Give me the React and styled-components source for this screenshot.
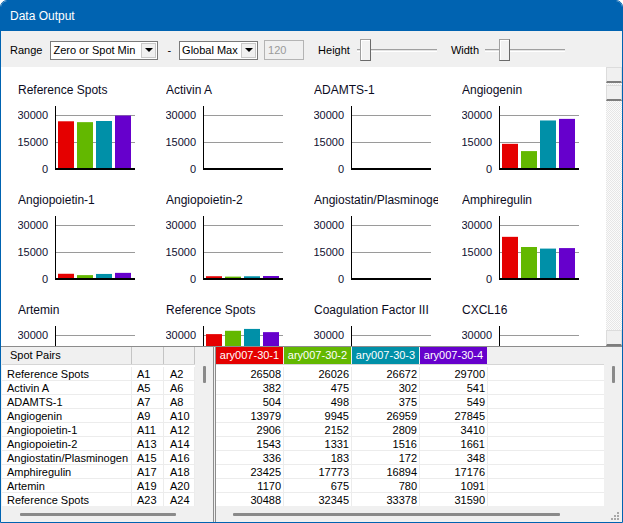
import React from 'react';
import styled, { createGlobalStyle } from 'styled-components';

const COLORS = ['#e50000', '#63b800', '#0090a8', '#6600cc'];
const SAMPLES = ['ary007-30-1', 'ary007-30-2', 'ary007-30-3', 'ary007-30-4'];

const ROWS = [
    ['Reference Spots', 'A1', 'A2', [26508, 26026, 26672, 29700]],
    ['Activin A', 'A5', 'A6', [382, 475, 302, 541]],
    ['ADAMTS-1', 'A7', 'A8', [504, 498, 375, 549]],
    ['Angiogenin', 'A9', 'A10', [13979, 9945, 26959, 27845]],
    ['Angiopoietin-1', 'A11', 'A12', [2906, 2152, 2809, 3410]],
    ['Angiopoietin-2', 'A13', 'A14', [1543, 1331, 1516, 1661]],
    ['Angiostatin/Plasminogen', 'A15', 'A16', [336, 183, 172, 348]],
    ['Amphiregulin', 'A17', 'A18', [23425, 17773, 16894, 17176]],
    ['Artemin', 'A19', 'A20', [1170, 675, 780, 1091]],
    ['Reference Spots', 'A23', 'A24', [30488, 32345, 33378, 31590]],
];

const CHARTS = [
    ...ROWS.map(r => ({ title: r[0], values: r[3] })),
    { title: 'Coagulation Factor III', values: [812, 640, 705, 930] },
    { title: 'CXCL16', values: [1204, 988, 1010, 1322] },
];

const GlobalStyle = createGlobalStyle`
    html, body {
        margin: 0;
        padding: 0;
        background: #ffffff;
    }
    * { box-sizing: border-box; }
`;

const Window = styled.div`
    width: 623px;
    height: 523px;
    display: flex;
    flex-direction: column;
    border: 1px solid #0063b1;
    border-radius: 7px 7px 0 0;
    overflow: hidden;
    background: #f0f0f0;
    font-family: "Liberation Sans", Arial, sans-serif;
    color: #000;
`;

const TitleBar = styled.div`
    height: 30px;
    flex: none;
    display: flex;
    align-items: center;
    padding-left: 9px;
    background: #0063b1;
    color: #fff;
    font-size: 12px;
`;

const Toolbar = styled.div`
    height: 36px;
    flex: none;
    display: flex;
    align-items: center;
    padding: 2px 0 0 9px;
    font-size: 11px;
`;

const Label = styled.span`
    margin-left: ${p => p.$ml || 0}px;
    white-space: nowrap;
`;

const Select = styled.div`
    margin-left: ${p => p.$ml || 0}px;
    width: ${p => p.$w}px;
    height: 19px;
    display: flex;
    align-items: stretch;
    background: #fff;
    border: 1px solid #7a7a7a;
`;

const SelectText = styled.span`
    flex: 1;
    padding-left: 2px;
    line-height: 17px;
    white-space: nowrap;
    overflow: hidden;
`;

const SelectButton = styled.span`
    width: 15px;
    margin: 1px;
    display: flex;
    align-items: center;
    justify-content: center;
    background: #f0f0f0;
    border: 1px solid #c8c8c8;
    &::after {
        content: '';
        border-left: 4px solid transparent;
        border-right: 4px solid transparent;
        border-top: 4px solid #000;
    }
`;

const DisabledInput = styled.div`
    margin-left: 6px;
    width: 40px;
    height: 20px;
    padding-left: 3px;
    line-height: 18px;
    color: #9a9a9a;
    background: #f0f0f0;
    border: 1px solid #b4b4b4;
`;

const Slider = styled.div`
    position: relative;
    margin-left: ${p => p.$ml || 0}px;
    width: 80px;
    height: 22px;
    display: flex;
    align-items: center;
`;

const SliderTrack = styled.div`
    width: 100%;
    height: 3px;
    border-top: 1px solid #a0a0a0;
    border-bottom: 1px solid #fff;
    background: #e3e3e3;
`;

const SliderThumb = styled.div`
    position: absolute;
    top: 0;
    left: ${p => p.$at}px;
    width: 11px;
    height: 22px;
    background: #f2f2f2;
    border: 1px solid #a0a0a0;
    border-right-color: #6a6a6a;
    border-bottom-color: #6a6a6a;
    box-shadow: inset 1px 1px 0 #fff;
`;

const ChartArea = styled.div`
    height: 279px;
    flex: none;
    display: flex;
`;

const ChartPanel = styled.div`
    flex: 1;
    background: #fff;
    overflow: hidden;
    padding: 16px 0 0 17px;
    display: grid;
    grid-template-columns: repeat(4, 148px);
    grid-auto-rows: 110px;
`;

const ChartCell = styled.div`
    display: flex;
    flex-direction: column;
`;

const ChartTitle = styled.div`
    width: 124px;
    height: 14px;
    line-height: 14px;
    font-size: 12px;
    color: #0b0b1e;
    white-space: nowrap;
    overflow: hidden;
`;

const ChartSvg = styled.svg`
    display: block;
    font-family: "Liberation Sans", Arial, sans-serif;
    font-size: 11px;
`;

const VScrollBar = styled.div`
    width: 16px;
    flex: none;
    display: flex;
    flex-direction: column;
    background: repeating-conic-gradient(#e6e6e6 0 25%, #fbfbfb 0 50%) 0 0 / 2px 2px;
`;

const ScrollBox = styled.div`
    height: ${p => p.$h}px;
    margin-top: ${p => p.$mt || 0}px;
    flex: none;
    background: #f0f0f0;
    border: 1px solid #dcdcdc;
    border-bottom: 2px solid #7d7d7d;
`;

const ScrollSpacer = styled.div`
    flex: 1;
`;

const BottomPanel = styled.div`
    flex: 1;
    display: flex;
    gap: 1px;
    padding-left: 1px;
    border-top: 1px solid #8c8c8c;
    font-size: 11px;
    min-height: 0;
`;

const Pane = styled.div`
    width: ${p => (p.$w ? `${p.$w}px` : 'auto')};
    flex: ${p => (p.$w ? 'none' : 1)};
    display: flex;
    flex-direction: column;
    border-left: ${p => (p.$left ? '1px solid #8c8c8c' : 'none')};
    border-right: ${p => (p.$right ? '1px solid #8c8c8c' : 'none')};
    min-width: 0;
`;

const PaneMain = styled.div`
    flex: 1;
    display: flex;
    min-height: 0;
`;

const Table = styled.div`
    flex: 1;
    display: flex;
    flex-direction: column;
    overflow: hidden;
    min-width: 0;
`;

const HeadRow = styled.div`
    height: 18px;
    flex: none;
    display: flex;
    border-bottom: 1px solid #d6d6d6;
`;

const HeadCell = styled.div`
    width: ${p => p.$w}px;
    flex: none;
    padding-left: ${p => p.$pl || 0}px;
    line-height: 17px;
    background: ${p => p.$bg || '#f0f0f0'};
    color: ${p => (p.$bg ? '#fff' : '#000')};
    text-align: ${p => (p.$bg ? 'center' : 'left')};
    border-right: 1px solid ${p => (p.$bg ? '#f0f0f0' : '#c4c4c4')};
    white-space: nowrap;
    overflow: hidden;
`;

const Body = styled.div`
    flex: 1;
    padding-top: 2px;
    background: #fff;
    overflow: hidden;
    width: ${p => (p.$w ? `${p.$w}px` : 'auto')};
`;

const Row = styled.div`
    height: 14px;
    display: flex;
`;

const Cell = styled.div`
    width: ${p => p.$w}px;
    flex: none;
    padding: 0 ${p => (p.$num ? 2 : 0)}px 0 ${p => p.$pl || 0}px;
    line-height: 14px;
    text-align: ${p => (p.$num ? 'right' : 'left')};
    border-right: 1px solid #ececec;
    border-bottom: 1px solid #ececec;
    white-space: nowrap;
    overflow: hidden;
`;

const Filler = styled.div`
    flex: 1;
    border-bottom: 1px solid #ececec;
`;

const ThinVScroll = styled.div`
    width: ${p => p.$w}px;
    flex: none;
    padding: 19px 0 0 ${p => p.$pl}px;
`;

const ThinThumb = styled.div`
    width: 3px;
    height: 17px;
    background: #8a8a8a;
    border-radius: 1px;
`;

const ThinHScroll = styled.div`
    height: 16px;
    flex: none;
    display: flex;
    align-items: center;
    padding-left: ${p => p.$pl}px;
`;

const ThinHThumb = styled.div`
    width: ${p => p.$w}px;
    height: 3px;
    background: #8a8a8a;
    border-radius: 1px;
`;

const Grip = styled.svg`
    margin-left: auto;
    margin-right: 3px;
    align-self: flex-end;
    margin-bottom: 2px;
`;

const BarChart = ({ title, values }) => {
    const scale = 54 / 30000;
    return (
        <ChartCell>
            <ChartTitle>{title}</ChartTitle>
            <ChartSvg width="124" height="80">
                <line x1="37" y1="18.5" x2="117" y2="18.5" stroke="#9a9a9a" />
                <line x1="37" y1="45.5" x2="117" y2="45.5" stroke="#9a9a9a" />
                {values.map((v, i) => {
                    const h = v * scale;
                    return <rect key={i} x={40 + i * 19} y={72 - h} width="16" height={h} fill={COLORS[i]} />;
                })}
                <line x1="37.5" y1="9" x2="37.5" y2="73" stroke="#000" />
                <line x1="37" y1="72" x2="117" y2="72" stroke="#000" strokeWidth="2" />
                <text x="30" y="22" textAnchor="end" fill="#101030">30000</text>
                <text x="30" y="49" textAnchor="end" fill="#101030">15000</text>
                <text x="30" y="76" textAnchor="end" fill="#101030">0</text>
            </ChartSvg>
        </ChartCell>
    );
};

const App = () => {
    return (
        <>
            <GlobalStyle />
            <Window>
                <TitleBar>Data Output</TitleBar>
                <Toolbar>
                    <Label>Range</Label>
                    <Select $ml={8} $w={108}>
                        <SelectText>Zero or Spot Min</SelectText>
                        <SelectButton />
                    </Select>
                    <Label $ml={9}>-</Label>
                    <Select $ml={8} $w={79}>
                        <SelectText>Global Max</SelectText>
                        <SelectButton />
                    </Select>
                    <DisabledInput>120</DisabledInput>
                    <Label $ml={14}>Height</Label>
                    <Slider $ml={7}>
                        <SliderTrack />
                        <SliderThumb $at={3} />
                    </Slider>
                    <Label $ml={14}>Width</Label>
                    <Slider $ml={6}>
                        <SliderTrack />
                        <SliderThumb $at={14} />
                    </Slider>
                </Toolbar>

                <ChartArea>
                    <ChartPanel>
                        {CHARTS.map((c, i) => (
                            <BarChart key={i} title={c.title} values={c.values} />
                        ))}
                    </ChartPanel>
                    <VScrollBar>
                        <ScrollBox $h={16} />
                        <ScrollBox $h={16} $mt={2} />
                        <ScrollSpacer />
                        <ScrollBox $h={16} />
                    </VScrollBar>
                </ChartArea>

                <BottomPanel>
                    <Pane $w={212} $right>
                        <PaneMain>
                            <Table>
                                <HeadRow>
                                    <HeadCell $w={130} $pl={8}>Spot Pairs</HeadCell>
                                    <HeadCell $w={32} />
                                    <HeadCell $w={31} />
                                </HeadRow>
                                <Body $w={193}>
                                    {ROWS.map((r, i) => (
                                        <Row key={i}>
                                            <Cell $w={130} $pl={5}>{r[0]}</Cell>
                                            <Cell $w={32} $pl={5}>{r[1]}</Cell>
                                            <Cell $w={31} $pl={6}>{r[2]}</Cell>
                                        </Row>
                                    ))}
                                </Body>
                            </Table>
                            <ThinVScroll $w={18} $pl={8}>
                                <ThinThumb />
                            </ThinVScroll>
                        </PaneMain>
                        <ThinHScroll $pl={18}>
                            <ThinHThumb $w={156} />
                        </ThinHScroll>
                    </Pane>

                    <Pane $left>
                        <PaneMain>
                            <Table>
                                <HeadRow>
                                    {SAMPLES.map((s, i) => (
                                        <HeadCell key={s} $w={68} $bg={COLORS[i]}>{s}</HeadCell>
                                    ))}
                                </HeadRow>
                                <Body>
                                    {ROWS.map((r, i) => (
                                        <Row key={i}>
                                            {r[3].map((v, j) => (
                                                <Cell key={j} $w={68} $num>{v}</Cell>
                                            ))}
                                            <Filler />
                                        </Row>
                                    ))}
                                </Body>
                            </Table>
                            <ThinVScroll $w={18} $pl={8}>
                                <ThinThumb />
                            </ThinVScroll>
                        </PaneMain>
                        <ThinHScroll $pl={17}>
                            <ThinHThumb $w={327} />
                            <Grip width="8" height="8">
                                {[[6, 0], [6, 3], [3, 3], [6, 6], [3, 6], [0, 6]].map(([x, y], i) => (
                                    <rect key={i} x={x} y={y} width="2" height="2" fill="#a8a8a8" />
                                ))}
                            </Grip>
                        </ThinHScroll>
                    </Pane>
                </BottomPanel>
            </Window>
        </>
    );
};

export default App;
